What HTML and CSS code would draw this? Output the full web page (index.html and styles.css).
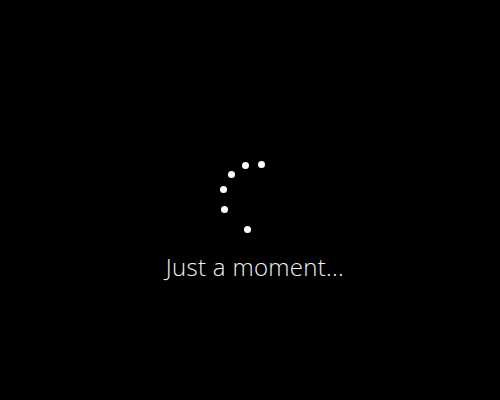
FILE: index.html
```html
<!DOCTYPE html>
<html>
<head>
<meta charset="utf-8">
<link rel="stylesheet" href="styles.css">
</head>
<body>
<div class="screen">
  <div class="spinner">
    <span class="dot" style="left:40.2px;top:0.8px"></span>
    <span class="dot" style="left:23.5px;top:1.5px"></span>
    <span class="dot" style="left:9.5px;top:10.5px"></span>
    <span class="dot" style="left:1.5px;top:26.2px"></span>
    <span class="dot" style="left:2.8px;top:46.2px"></span>
    <span class="dot" style="left:25.5px;top:65.8px"></span>
  </div>
  <div class="message">Just a moment...</div>
</div>
</body>
</html>
```
FILE: styles.css
```css
html, body {
  margin: 0;
  padding: 0;
  background: #000;
}
.screen {
  width: 500px;
  height: 400px;
  box-sizing: border-box;
  padding-top: 160px;
  padding-left: 10px;
  display: flex;
  flex-direction: column;
  align-items: center;
}
.spinner {
  position: relative;
  width: 74px;
  height: 74px;
}
.dot {
  position: absolute;
  width: 7px;
  height: 7px;
  border-radius: 50%;
  background: #fff;
}
.message {
  margin-top: 18px;
  font-family: "Open Sans", "Noto Sans", sans-serif;
  font-weight: 300;
  font-size: 24px;
  line-height: 30px;
  letter-spacing: 0.3px;
  color: #f0f0f0;
}
```
